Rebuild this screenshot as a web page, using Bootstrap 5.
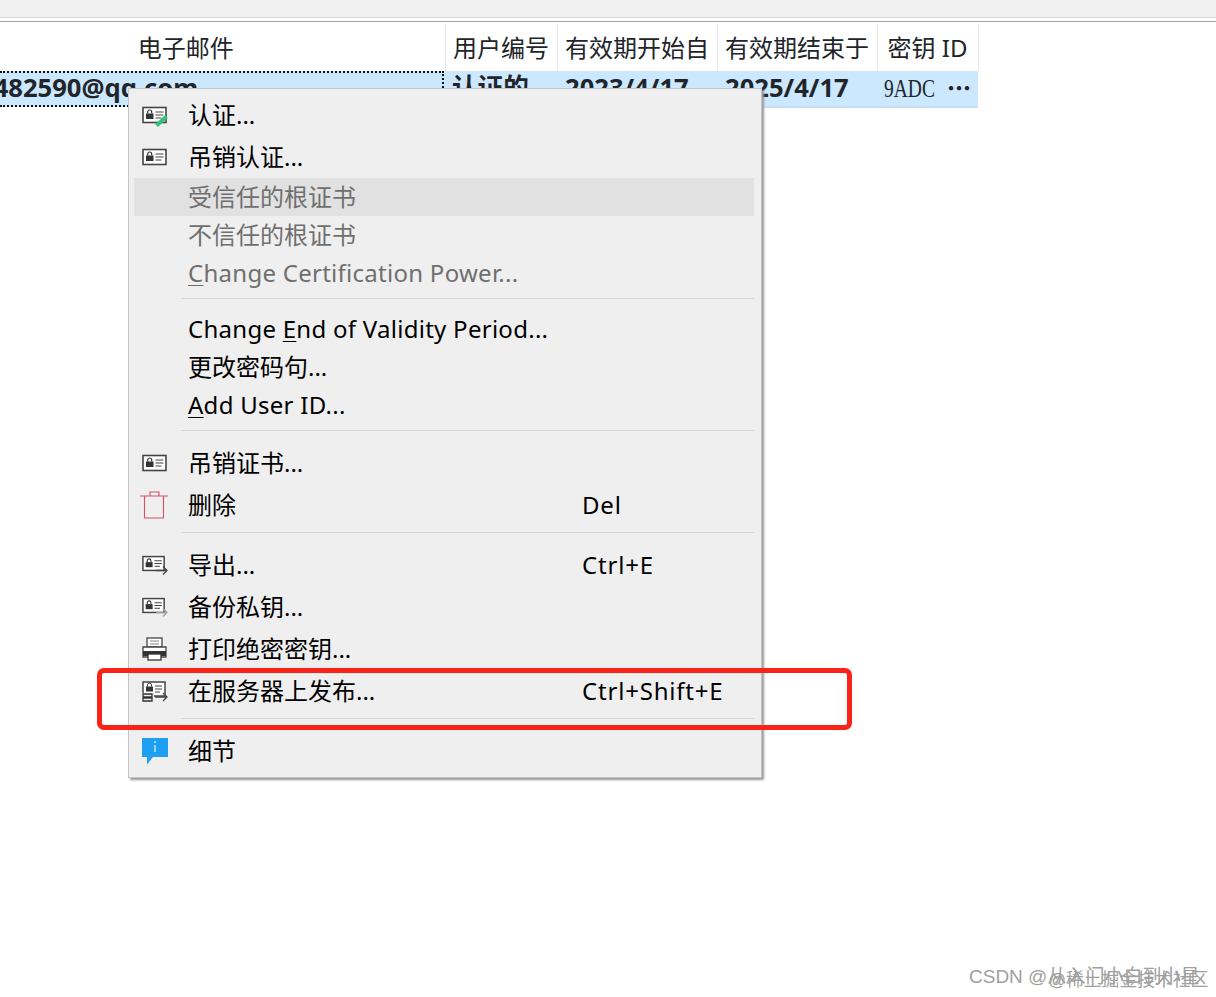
<!DOCTYPE html>
<html lang="zh-CN">
<head>
<meta charset="utf-8">
<title>Kleopatra</title>
<link href="https://cdn.jsdelivr.net/npm/bootstrap@5.3.0/dist/css/bootstrap.min.css" rel="stylesheet">
<style>
body{background:#fff;font-family:"Noto Sans","Noto Sans CJK SC",sans-serif;font-size:24px;color:#000;overflow:hidden;height:997px;position:relative}
.topstrip{height:18px;background:#f0f0f0;border-bottom:1px solid #dcdcdc}
.topgap{height:4px;margin-bottom:2px;border-bottom:1px solid #a0a0a0}
.keytable{width:978px;table-layout:fixed;--bs-table-bg:transparent;line-height:1}
.keytable th{height:47px;padding:0;font-weight:400;text-align:center;white-space:nowrap;border-right:1px solid #e5e5e5;vertical-align:middle;overflow:hidden}
.keytable th:first-child{padding-right:73px}
.keytable td{height:36px;padding:0 0 2px 7px;background:#cce8ff;font-weight:700;font-size:25.6px;white-space:nowrap;overflow:hidden;vertical-align:middle;border-bottom:2px solid #c4dff5}
.keytable td.focuscell{padding:0;border-bottom:0}
.focusbox{height:36px;margin-right:1px;display:flex;align-items:center;border-top:2px dotted #111;border-bottom:2px dotted #111;border-right:2px dotted #111;padding-bottom:2px}
.mailtext{display:block;margin-left:-21px}
.keyid{display:inline-block;width:63px;font-family:"Liberation Serif",serif;font-weight:400;font-size:25px;transform:scaleX(.78);transform-origin:left center}
.dotsmore{font-family:"Noto Sans CJK SC",sans-serif;font-size:24px;font-weight:900}
.col-mail{width:445px}.col-uid{width:112px}.col-date{width:160px}.col-id{width:101px}
.ctxmenu{--bs-dropdown-min-width:0;top:88px;left:128px;width:634px;padding:5px 7px 5px 5px;margin:0;background:#efefef;border:1px solid #c4c4c4;border-radius:0;box-shadow:2px 2px 2px #9a9a9a;font-size:24px;line-height:1}
.ctxmenu .dropdown-item{padding:0;color:#000;font-size:24px;height:38px}
.ctxmenu .dropdown-item.tall{height:42px}
.ctxmenu .dropdown-item.off{color:#6f6f6f}
.ctxmenu .dropdown-item.hot{background:#e1e1e1}
.ctxicon{width:54px;padding-left:8px;flex:none;display:flex;align-items:center}
.ctxlabel{width:394px;flex:none}
.latintext{letter-spacing:.27px}
.keystext{letter-spacing:.8px}
.trashicon{margin-left:-2px}
.ctxmenu u{text-underline-offset:3px;text-decoration-thickness:1px}
.ctxmenu .dropdown-divider{margin:0 0 11px 47px;height:7px;border-top:0;border-bottom:1px solid #d6d6d6;opacity:1}
.redmark{position:absolute;z-index:1010;left:97px;top:668px;width:755px;height:62px;border:5px solid #fb2317;border-radius:7px;pointer-events:none}
.wmark{position:absolute;top:966px;font-family:"Liberation Sans","Noto Sans CJK SC",sans-serif;font-size:19px;color:#a0a0a0;white-space:nowrap;line-height:22px}
.wm-a{left:969px}
.wm-b{left:1048px;top:969px;font-size:17.8px}
</style>
</head>
<body>
<svg width="0" height="0" class="position-absolute">
  <symbol id="card" viewBox="0 0 26 18"><rect x="1" y="1.500" width="23" height="15" fill="#fff" stroke="#444" stroke-width="1.600"/><rect x="4" y="7.500" width="7.500" height="5.500" fill="#333"/><path d="M5.700 7.500V6a2 2 0 0 1 4 0v1.500" fill="none" stroke="#333" stroke-width="1.200"/><path d="M13.500 6h8M13.500 9h8M13.500 12h6" stroke="#444" stroke-width="1.200"/></symbol>
</svg>

<div class="topstrip"></div>
<div class="topgap"></div>
<table class="table table-borderless keytable mb-0">
  <colgroup><col class="col-mail"><col class="col-uid"><col class="col-date"><col class="col-date"><col class="col-id"></colgroup>
  <thead><tr><th>电子邮件</th><th>用户编号</th><th>有效期开始自</th><th>有效期结束于</th><th>密钥 ID</th></tr></thead>
  <tbody><tr>
    <td class="focuscell"><div class="focusbox"><span class="mailtext">1482590@qq.com</span></div></td>
    <td>认证的</td><td class="ps-2">2023/4/17</td><td class="ps-2">2025/4/17</td>
    <td><span class="keyid">9ADC</span><span class="dotsmore">…</span></td>
  </tr></tbody>
</table>

<div class="dropdown-menu show ctxmenu">
  <a class="dropdown-item tall d-flex align-items-center" href="#"><span class="ctxicon"><svg width="27" height="26" viewBox="0 0 27 26"><use href="#card" y="4" width="26" height="18"/><path d="M14.500 23.500l10-9" stroke="#2fc27a" stroke-width="4"/></svg></span><span class="ctxlabel">认证...</span></a>
  <a class="dropdown-item tall d-flex align-items-center" href="#"><span class="ctxicon"><svg width="26" height="18"><use href="#card" width="26" height="18"/></svg></span><span class="ctxlabel">吊销认证...</span></a>
  <a class="dropdown-item off hot d-flex align-items-center" href="#"><span class="ctxicon"></span><span class="ctxlabel">受信任的根证书</span></a>
  <a class="dropdown-item off d-flex align-items-center" href="#"><span class="ctxicon"></span><span class="ctxlabel">不信任的根证书</span></a>
  <a class="dropdown-item off d-flex align-items-center" href="#"><span class="ctxicon"></span><span class="ctxlabel latintext"><u>C</u>hange Certification Power...</span></a>
  <div class="dropdown-divider"></div>
  <a class="dropdown-item d-flex align-items-center" href="#"><span class="ctxicon"></span><span class="ctxlabel latintext">Change <u>E</u>nd of Validity Period...</span></a>
  <a class="dropdown-item d-flex align-items-center" href="#"><span class="ctxicon"></span><span class="ctxlabel">更改密码句...</span></a>
  <a class="dropdown-item d-flex align-items-center" href="#"><span class="ctxicon"></span><span class="ctxlabel latintext"><u>A</u>dd User ID...</span></a>
  <div class="dropdown-divider"></div>
  <a class="dropdown-item tall d-flex align-items-center" href="#"><span class="ctxicon"><svg width="26" height="18"><use href="#card" width="26" height="18"/></svg></span><span class="ctxlabel">吊销证书...</span></a>
  <a class="dropdown-item tall d-flex align-items-center" href="#"><span class="ctxicon"><svg class="trashicon" width="28" height="28" viewBox="0 0 28 28" fill="none" stroke="#d2506a" stroke-width="1.100"><path d="M0 5h28M4.500 5v22h19V5M10 5V1h9v4"/></svg></span><span class="ctxlabel">删除</span><span class="keystext">Del</span></a>
  <div class="dropdown-divider"></div>
  <a class="dropdown-item tall d-flex align-items-center" href="#"><span class="ctxicon"><svg width="26" height="20" viewBox="0 0 26 20"><use href="#card" width="24" height="17"/><path d="M14 15.500h11M21 11.500l4 4-4 4" fill="none" stroke="#444" stroke-width="1.300"/></svg></span><span class="ctxlabel">导出...</span><span class="keystext">Ctrl+E</span></a>
  <a class="dropdown-item tall d-flex align-items-center" href="#"><span class="ctxicon"><svg width="26" height="20" viewBox="0 0 26 20"><use href="#card" width="24" height="17"/><path d="M14 15.500h11M21 11.500l4 4-4 4" fill="none" stroke="#a0a0a0" stroke-width="1.300"/></svg></span><span class="ctxlabel">备份私钥...</span></a>
  <a class="dropdown-item tall d-flex align-items-center" href="#"><span class="ctxicon"><svg width="25" height="24" viewBox="0 0 25 24"><rect x="5" y="1" width="15" height="9" fill="#fff" stroke="#444" stroke-width="1.300"/><path d="M8 4h9M8 7h9" stroke="#888"/><path d="M1 10h23v10H1z" fill="#fff" stroke="#444" stroke-width="1.300"/><path d="M1 14h23v5H1z" fill="#333"/><rect x="6" y="17" width="13" height="6" fill="#fff" stroke="#333" stroke-width="1.300"/></svg></span><span class="ctxlabel">打印绝密密钥...</span></a>
  <a class="dropdown-item tall d-flex align-items-center" href="#"><span class="ctxicon"><svg width="26" height="21" viewBox="0 0 26 21"><rect x="1" y="1" width="22" height="14" fill="#fff" stroke="#444" stroke-width="1.500"/><rect x="4" y="5.500" width="7" height="5" fill="#333"/><path d="M5.500 5.500V4a2 2 0 0 1 4 0v1.500" fill="none" stroke="#333"/><path d="M13 5h7M13 8h7M13 11h5" stroke="#444"/><rect x="0" y="12" width="12" height="9" fill="#efefef"/><path d="M1 13h9v3H1zM1 17h9v3H1z" fill="none" stroke="#333" stroke-width="1.300"/><path d="M13 16h12M21 12l4 4-4 4" fill="none" stroke="#444" stroke-width="1.300"/></svg></span><span class="ctxlabel">在服务器上发布...</span><span class="keystext">Ctrl+Shift+E</span></a>
  <div class="dropdown-divider"></div>
  <a class="dropdown-item tall d-flex align-items-center" href="#"><span class="ctxicon"><svg width="26" height="27" viewBox="0 0 26 27"><path d="M0 0h26v19H11l-6 7.500V19H0z" fill="#1e9ff2"/><path d="M13 7v7" stroke="#bfe6ff" stroke-width="1.500"/><circle cx="13" cy="4" r="1" fill="#bfe6ff"/></svg></span><span class="ctxlabel">细节</span></a>
</div>

<div class="redmark"></div>
<div class="wmark wm-a">CSDN @从入门小白到小星</div>
<div class="wmark wm-b">@稀土掘金技术社区</div>
</body>
</html>
